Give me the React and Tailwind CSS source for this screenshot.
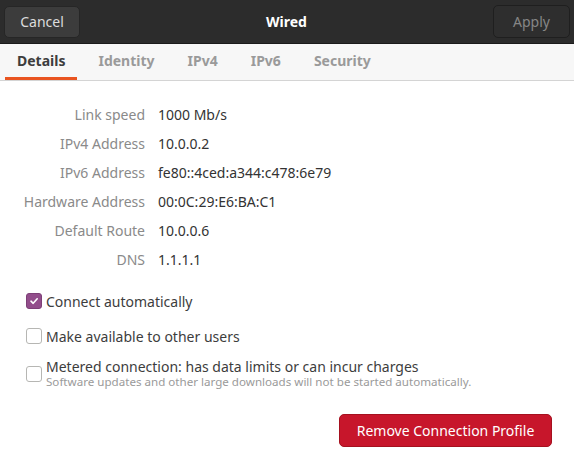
import React, { useState } from "react";

const details = [
  ["Link speed", "1000 Mb/s"],
  ["IPv4 Address", "10.0.0.2"],
  ["IPv6 Address", "fe80::4ced:a344:c478:6e79"],
  ["Hardware Address", "00:0C:29:E6:BA:C1"],
  ["Default Route", "10.0.0.6"],
  ["DNS", "1.1.1.1"],
];

const tabs = ["Details", "Identity", "IPv4", "IPv6", "Security"];

const Check = ({ checked, onClick }) => (
  <button
    onClick={onClick}
    className={
      "w-[16px] h-[16px] rounded-[3px] flex items-center justify-center shrink-0 " +
      (checked ? "bg-[#924d8b] border border-[#7d3f77]" : "bg-white border border-[#b6b6b3]")
    }
  >
    {checked && (
      <svg width="10" height="10" viewBox="0 0 10 10">
        <path d="M2 5.2 L4.2 7.3 L8.2 2.8" stroke="white" strokeWidth="1.6" fill="none" strokeLinecap="round" strokeLinejoin="round" />
      </svg>
    )}
  </button>
);

export default function App() {
  const [active, setActive] = useState("Details");
  const [auto, setAuto] = useState(true);
  const [shared, setShared] = useState(false);
  const [metered, setMetered] = useState(false);

  return (
    <div className="w-[574px] h-[467px] bg-white flex flex-col text-[14px] text-[#3d3d3d]" style={{ fontFamily: '"Noto Sans", sans-serif' }}>
      {/* header */}
      <div className="h-[44px] bg-[#2c2c2c] border-b border-[#1b1b1b] flex items-center justify-between px-[4px]">
        <button className="w-[76px] h-[32px] rounded-[5px] bg-[#3c3c3c] border border-[#262626] text-[#dcdcdc] text-[14px]">
          Cancel
        </button>
        <div className="text-white font-bold text-[14px]">Wired</div>
        <button className="w-[77px] h-[33px] rounded-[5px] bg-[#2e2e2e] border border-[#1f1f1f] text-[#868686] text-[14px]">
          Apply
        </button>
      </div>

      {/* tabs */}
      <div className="h-[37px] bg-[#f7f7f7] border-b border-[#d4d4d4] flex px-[5px] gap-[9px]">
        {tabs.map((t) => (
          <button
            key={t}
            onClick={() => setActive(t)}
            className={
              "px-[12px] font-bold text-[14px] border-b-[3px] " +
              (active === t ? "text-[#3d3d3d] border-[#e95420]" : "text-[#9a9a9a] border-transparent")
            }
          >
            {t}
          </button>
        ))}
      </div>

      {/* details */}
      <div className="pt-[19px] flex flex-col">
        {details.map(([k, v]) => (
          <div key={k} className="flex h-[29px] items-center">
            <div className="w-[145px] text-right text-[#8a8a8a] shrink-0">{k}</div>
            <div className="pl-[13px] text-[#333333]">{v}</div>
          </div>
        ))}
      </div>

      {/* options */}
      <div className="pl-[26px] pt-[19px] flex flex-col">
        <div className="flex items-center gap-[4px] h-[16px]">
          <Check checked={auto} onClick={() => setAuto(!auto)} />
          <span>Connect automatically</span>
        </div>
        <div className="flex items-center gap-[4px] h-[16px] mt-[19px]">
          <Check checked={shared} onClick={() => setShared(!shared)} />
          <span>Make available to other users</span>
        </div>
        <div className="flex items-center gap-[4px] mt-[15px]">
          <Check checked={metered} onClick={() => setMetered(!metered)} />
          <div className="flex flex-col">
            <span className="leading-[16px]">Metered connection: has data limits or can incur charges</span>
            <span className="text-[11.6px] text-[#9a9a9a] leading-[14px]">
              Software updates and other large downloads will not be started automatically.
            </span>
          </div>
        </div>
      </div>

      <div className="flex justify-end pr-[22px] mt-[25px]">
        <button className="w-[213px] h-[33px] rounded-[5px] bg-[#c7162b] border border-[#a5111f] text-white text-[14px]">
          Remove Connection Profile
        </button>
      </div>
    </div>
  );
}
